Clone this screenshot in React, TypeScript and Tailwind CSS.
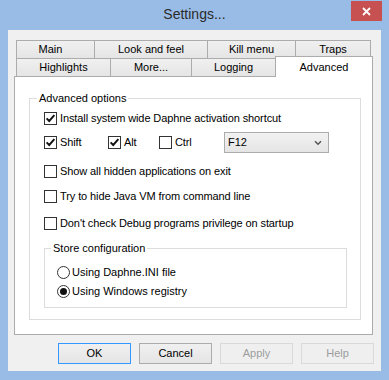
import React from "react";

const font = "font-['Liberation_Sans',Arial,sans-serif]";

const Check = ({ checked, label, w }: { checked?: boolean; label: string; w?: string }) => (
  <div className={`flex items-center h-[13px] ${w ?? ""}`}>
    <div className="w-[13px] h-[13px] border border-[#333333] bg-white shrink-0 flex items-center justify-center">
      {checked && (
        <svg width="11" height="11" viewBox="0 0 11 11">
          <path d="M1.6 5.4 L4.2 8 L9.4 2.2" fill="none" stroke="#111" strokeWidth="1.9" />
        </svg>
      )}
    </div>
    <span className="ml-[3px] text-[11px] leading-[13px] text-black whitespace-nowrap tracking-[-0.1px]">{label}</span>
  </div>
);

const Radio = ({ checked, label }: { checked?: boolean; label: string }) => (
  <div className="flex items-center h-[13px]">
    <div className="w-[13px] h-[13px] rounded-full border border-[#333333] bg-white flex items-center justify-center shrink-0">
      {checked && <div className="w-[7px] h-[7px] rounded-full bg-[#111]" />}
    </div>
    <span className="ml-[2px] text-[11px] leading-[13px] text-black whitespace-nowrap">{label}</span>
  </div>
);

const Tab = ({ label, w, first, pad }: { label: string; w: string; first?: boolean; pad?: string }) => (
  <div
    className={`${w} h-[18px] ${first ? "" : "-ml-px"} ${pad ?? ""} border border-b-0 border-[#acacac] bg-gradient-to-b from-[#f0f0f0] to-[#e5e5e5] flex items-center justify-center text-[11px] text-black`}
  >
    {label}
  </div>
);

const Button = ({ label, kind }: { label: string; kind: "default" | "normal" | "disabled" }) => {
  const cls =
    kind === "default"
      ? "border-[#3399ff] text-black bg-gradient-to-b from-[#f0f0f0] to-[#e5e5e5]"
      : kind === "normal"
      ? "border-[#acacac] text-black bg-gradient-to-b from-[#f0f0f0] to-[#e5e5e5]"
      : "border-[#d9d9d9] text-[#9d9d9d] bg-[#efefef]";
  return (
    <div className={`w-[73px] h-[21px] border ${cls} flex items-center justify-center text-[11px]`}>
      {label}
    </div>
  );
};

export default function App() {
  return (
    <div className={`w-[389px] h-[380px] bg-[#99bce6] flex flex-col ${font}`}>
      {/* title bar */}
      <div className="h-[30px] flex">
        <div className="w-[38px]" />
        <div className="flex-1 flex items-center justify-center text-[14px] text-[#2b2b2b] pb-[1px]">Settings...</div>
        <div className="w-[31px] h-[20px] mt-px mr-[7px] bg-[#c75050] flex items-center justify-center">
          <svg width="9" height="9" viewBox="0 0 9 9">
            <path d="M1 1 L8 8 M8 1 L1 8" stroke="#fff" strokeWidth="1.8" />
          </svg>
        </div>
      </div>

      {/* client area */}
      <div className="mx-[8px] h-[341px] bg-[#f0f0f0] flex flex-col">
        {/* tabs */}
        <div className="mt-[10px] ml-[8px] flex flex-col">
          <div className="flex">
            <Tab label="Main" w="w-[79px]" first pad="pr-[10px]" />
            <Tab label="Look and feel" w="w-[114px]" />
            <Tab label="Kill menu" w="w-[89px]" />
            <Tab label="Traps" w="w-[76px]" />
          </div>
          <div className="flex h-[18px] items-end">
            <Tab label="Highlights" w="w-[95px]" first />
            <Tab label="More..." w="w-[82px]" />
            <Tab label="Logging" w="w-[85px]" />
            <div className="relative z-10 -ml-px w-[98px] h-[21px] -mb-px border border-b-0 border-[#acacac] bg-white flex justify-center pt-[2px] text-[11px] text-black">
              Advanced
            </div>
          </div>
        </div>

        {/* panel */}
        <div className="ml-[6px] w-[359px] h-[259px] border border-[#acacac] bg-white flex flex-col">
          <div className="relative mt-[21px] ml-[14px] w-[332px] border border-[#dcdcdc] flex flex-col">
            <div className="absolute -top-[8px] left-[7px] bg-white px-[2px] text-[11px] leading-[14px] text-black">
              Advanced options
            </div>
            <div className="pl-[14px] pt-[13px] flex flex-col">
              <Check checked label="Install system wide Daphne activation shortcut" />
              <div className="mt-[7px] h-[21px] flex items-center">
                <Check checked label="Shift" w="w-[64px]" />
                <Check checked label="Alt" w="w-[51px]" />
                <Check label="Ctrl" w="w-[65px]" />
                <div className="w-[105px] h-[21px] border border-[#acacac] bg-gradient-to-b from-[#f2f2f2] to-[#e5e5e5] flex items-center justify-between pl-[3px] pr-[6px] text-[11px] text-black">
                  <span>F12</span>
                  <svg width="8" height="6" viewBox="0 0 8 6">
                    <path d="M1 1.2 L4 4.2 L7 1.2" fill="none" stroke="#555" strokeWidth="1.5" />
                  </svg>
                </div>
              </div>
              <div className="mt-[12px]">
                <Check label="Show all hidden applications on exit" />
              </div>
              <div className="mt-[12px]">
                <Check label="Try to hide Java VM from command line" />
              </div>
              <div className="mt-[14px]">
                <Check label="Don't check Debug programs privilege on startup" />
              </div>
            </div>

            {/* store configuration */}
            <div className="relative mt-[18px] mb-[11px] ml-[14px] w-[303px] border border-[#dcdcdc] flex flex-col pl-[12px] pt-[17px] pb-[9px]">
              <div className="absolute -top-[8px] left-[6px] bg-white px-[2px] text-[11px] leading-[14px] text-black">
                Store configuration
              </div>
              <Radio label="Using Daphne.INI file" />
              <div className="mt-[6px]">
                <Radio checked label="Using Windows registry" />
              </div>
            </div>
          </div>
        </div>

        {/* buttons */}
        <div className="mt-[8px] ml-[50px] flex gap-[8px]">
          <Button label="OK" kind="default" />
          <Button label="Cancel" kind="normal" />
          <Button label="Apply" kind="disabled" />
          <Button label="Help" kind="disabled" />
        </div>
      </div>
    </div>
  );
}
